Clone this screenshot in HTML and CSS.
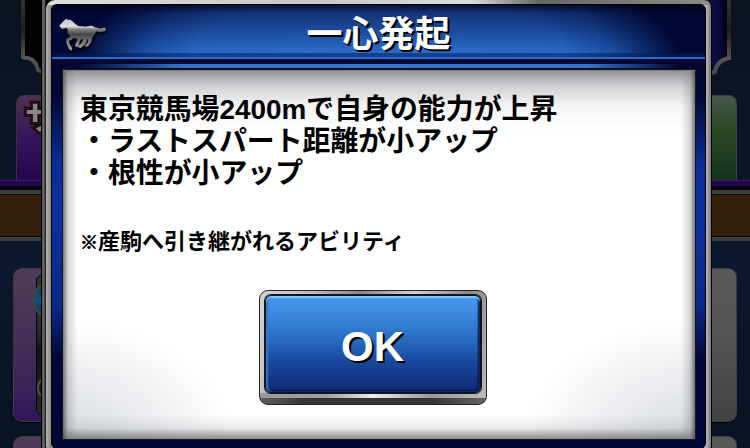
FILE: index.html
```
<!DOCTYPE html>
<html lang="ja">
<head>
    <meta charset="UTF-8">
    <meta name="viewport" content="width=device-width, initial-scale=1.0">
    <title>一心発起</title>
    <link rel="stylesheet" href="styles.css">
</head>
<body>

<!-- Dimmed screen, left of the dialog -->
<div class="side side-left">
    <svg class="emblem" width="42" height="95" viewBox="0 0 42 95">
        <defs>
            <linearGradient id="rim" x1="0" y1="0" x2="0" y2="1">
                <stop offset="0" stop-color="#343434"/>
                <stop offset="0.45" stop-color="#1e1e1e"/>
                <stop offset="0.8" stop-color="#555"/>
                <stop offset="1" stop-color="#484848"/>
            </linearGradient>
        </defs>
        <path d="M23 -4V57Q24 58 28 58Q36 60 38 70L45 73V-4Z" fill="#020203" stroke="url(#rim)" stroke-width="4"/>
    </svg>
    <div class="tab tab-purple">サ</div>
    <div class="strip"></div>
    <div class="brown"></div>
    <div class="card card-purple">
        <div class="gauge">
            <div class="orb"></div>
            <div class="ring"></div>
        </div>
    </div>
    <div class="card card-purple"></div>
</div>

<!-- Dialog -->
<div class="dialog">
    <div class="frame">
        <div class="inner">
            <div class="header">
                <svg class="horse" width="48" height="36" viewBox="22 34 144 108">
                    <defs>
                        <linearGradient id="silver" gradientUnits="userSpaceOnUse" x1="0" y1="38" x2="0" y2="134">
                            <stop offset="0" stop-color="#c4c4c4"/>
                            <stop offset="0.25" stop-color="#dedede"/>
                            <stop offset="0.34" stop-color="#858585"/>
                            <stop offset="0.5" stop-color="#454545"/>
                            <stop offset="0.7" stop-color="#747474"/>
                            <stop offset="1" stop-color="#aaa"/>
                        </linearGradient>
                    </defs>
                    <path d="M27 60L39 47L46 40L51 43L61 44L73 55L82 62L105 64L122 61L134 66L150 70L163 67L164 75L150 79L136 76L131 87L124 95L121 109L112 121L102 121L112 111L113 98L108 101L105 112L91 126L80 123L91 116L98 103L94 97L86 107L84 118L76 123L74 117L80 106L81 98L68 96L64 101L54 105L56 116L64 127L62 134L55 129L47 109L48 101L60 93L53 84L51 68L45 66L34 70Z" fill="url(#silver)" stroke="url(#silver)" stroke-width="2" stroke-linejoin="round"/>
                </svg>
                <h1>一心発起</h1>
            </div>
            <div class="body">
                <div class="panel">
                    <p class="description">東京競馬場2400mで自身の能力が上昇<br>・ラストスパート距離が小アップ<br>・根性が小アップ</p>
                    <p class="note"><span class="mark">※</span>産駒へ引き継がれるアビリティ</p>
                    <button class="ok-button"><span class="ok-face">OK</span></button>
                </div>
            </div>
        </div>
    </div>
</div>

<!-- Dimmed screen, right of the dialog -->
<div class="side side-right">
    <svg class="emblem" width="38" height="95" viewBox="0 0 38 95">
        <defs>
            <linearGradient id="navy" x1="0" y1="0" x2="1" y2="0">
                <stop offset="0" stop-color="#0e1152"/>
                <stop offset="0.5" stop-color="#0b0d40"/>
                <stop offset="0.85" stop-color="#02031a"/>
            </linearGradient>
        </defs>
        <path d="M17 -4V58Q5 60 3 72L-5 74V-4Z" fill="url(#navy)" stroke="url(#rim)" stroke-width="4"/>
    </svg>
    <div class="tab tab-green"></div>
    <div class="strip"></div>
    <div class="brown"></div>
    <div class="card card-gray"></div>
    <div class="card card-gray"></div>
</div>

</body>
</html>
```

FILE: styles.css
```
* {
    box-sizing: border-box;
}

body {
    margin: 0;
    width: 750px;
    height: 448px;
    overflow: hidden;
    display: flex;
    background-color: #0a1426;
    font-family: "Liberation Sans", "Noto Sans CJK JP", sans-serif;
    font-weight: bold;
}

/* Background screen */
.side {
    height: 448px;
    overflow: hidden;
    display: flex;
    flex-direction: column;
    background: linear-gradient(#0a1220, #0b1729 40%, #0b1830 60%, #0a1224);
}

.side-left {
    width: 41px;
}

.side-right {
    width: 38px;
}

.emblem {
    display: block;
    flex: none;
}

.tab {
    flex: none;
    height: 85px;
    border: 1px solid #3b3244;
    border-bottom: none;
}

.tab-purple {
    margin-left: 16px;
    padding: 3px 0 0 8px;
    border-right: none;
    border-radius: 8px 0 0 0;
    background: linear-gradient(#4b3153, #35165a 50%, #22064f);
    color: #868686;
    font-size: 32px;
    line-height: 38px;
    overflow: hidden;
    white-space: nowrap;
    -webkit-text-stroke: 6px #210e12;
    paint-order: stroke fill;
}

.tab-green {
    margin-right: 13px;
    border-color: #384339;
    border-left: none;
    border-radius: 0 8px 0 0;
    background: linear-gradient(#46574b, #2c4823 40%, #12351c);
}

.strip {
    flex: none;
    height: 10px;
    background: #24054f;
    border-top: 1px solid #35205a;
    border-bottom: 4px solid #060509;
}

.brown {
    flex: none;
    height: 51px;
    background: #33200a;
    border-top: 4px solid #3d3d3f;
    border-bottom: 4px solid #3b3b3c;
    box-shadow: inset 0 1px #0d0803, inset 0 -1px #0d0803;
}

.card {
    flex: none;
    height: 154px;
    margin-top: 14px;
    border: 1px solid #3c3c3c;
    box-shadow: 0 1px #000;
}

.brown + .card {
    margin-top: 27px;
}

.card-purple {
    margin-left: 13px;
    border-right: none;
    border-radius: 9px 0 0 9px;
    background: linear-gradient(#4e3c58, #442e57 50%, #31175a);
}

.card-gray {
    margin-right: 13px;
    border-left: none;
    border-radius: 0 9px 9px 0;
    background: linear-gradient(#595959, #555 40%, #424242);
}

.gauge {
    width: 16px;
    height: 140px;
    margin: 6px 0 0 22px;
    border: 1px solid #050505;
    border-radius: 5px;
    background: linear-gradient(#333, #2b2b2b 40%, #111 55%, #292929);
}

.orb {
    width: 38px;
    height: 38px;
    margin: 5px 0 0 -5px;
    border: 3px solid #3d4348;
    border-radius: 50%;
    background: linear-gradient(#083754, #0d527d 50%, #073150);
}

.ring {
    width: 24px;
    height: 24px;
    margin-top: 57px;
    border: 2px solid #4d4d4d;
    border-radius: 50%;
    background: #171717;
}

/* Dialog frame */
.dialog {
    width: 671px;
    height: 470px;
    padding: 0 1px 0 5px;
    background: linear-gradient(90deg, #000 1px, #555 1px, #69696b 3px, #3d3d3e 4px, #000 5px);
    border-radius: 0 8px 0 0;
}

.frame {
    height: 453px;
    padding: 4px 5px 4px;
    border-radius: 9px 7px 8px 8px;
    background:
        linear-gradient(90deg, #dedede, #c9c9c9 40%, #ddd 64%, #666 74%, #8b8b8b 100%) 0 0 / 100% 5px no-repeat,
        linear-gradient(90deg, #b5b6b6, #858686 5px, #8b898a 655px, #bdb9bb 660px, #7b7779);
}

.inner {
    height: 100%;
    border: 1px solid #000;
    border-radius: 6px;
    overflow: hidden;
    background: linear-gradient(#000733 0, #000832 90px, #0b2a94 155px, #0d30a0 200px, #0b2889 300px, #000736 355px, #000735);
}

.header {
    display: flex;
    height: 54px;
    padding-left: 6px;
    border-bottom: 2px solid #2a6cca;
    background:
        linear-gradient(rgba(5, 28, 90, 0.55), rgba(5, 28, 90, 0.55)) 0 100% / 100% 4px no-repeat,
        linear-gradient(rgba(0, 3, 25, 0.85), rgba(0, 8, 50, 0.55) 8px, rgba(0, 10, 60, 0.4) 20px, rgba(0, 0, 0, 0) 48px),
        radial-gradient(ellipse 300px 105px at 50% 100%, #2c6ccd 0, #2a69c8 62%, #1c50a4 78%, #000733 100%);
}

.horse {
    flex: none;
    margin-top: 12px;
    filter: drop-shadow(1px 2px 1px #000);
}

h1 {
    margin: 0 54px 0 0;
    flex: 1;
    text-align: center;
    color: #fff;
    font-family: "Noto Sans CJK JP", sans-serif;
    font-size: 36px;
    font-weight: bold;
    line-height: 52px;
    text-shadow: 1px 1px #000, 2px 2px #000;
}

.body {
    padding: 10px 9px 0 10px;
    background:
        linear-gradient(90deg, rgba(26, 88, 176, 0) 4%, #2f74cd 20%, #3377d0 50%, #2f74cd 82%, rgba(26, 88, 176, 0) 96%) 0 5px / 100% 4px no-repeat;
}

.panel {
    display: flex;
    flex-direction: column;
    height: 371px;
    padding: 24px 17px 0;
    border: 1px solid #18191c;
    background:
        linear-gradient(#7c7d7c, #7c7d7c) 0 0 / 100% 1px no-repeat,
        linear-gradient(90deg, rgba(80, 82, 84, 0.8), rgba(120, 122, 125, 0.3) 5px, rgba(255, 255, 255, 0) 14px),
        linear-gradient(270deg, rgba(80, 82, 84, 0.8), rgba(120, 122, 125, 0.3) 5px, rgba(255, 255, 255, 0) 14px),
        linear-gradient(0deg, rgba(90, 92, 94, 0.7), rgba(150, 153, 158, 0.2) 11px, rgba(255, 255, 255, 0) 24px),
        linear-gradient(rgba(105, 108, 118, 0.75), rgba(150, 152, 158, 0.45) 16px, rgba(220, 221, 224, 0.3) 36px, rgba(255, 255, 255, 0) 65px),
        radial-gradient(ellipse 170px 120px at 0 100%, rgba(185, 191, 200, 0.6), rgba(255, 255, 255, 0)),
        radial-gradient(ellipse 170px 120px at 100% 100%, rgba(185, 191, 200, 0.6), rgba(255, 255, 255, 0)),
        #fff;
}

/* Text */
.description {
    margin: 0;
    color: #000;
    font-size: 27.9px;
    line-height: 32px;
    white-space: nowrap;
}

.note {
    margin: 35px 0 0;
    color: #000;
    font-size: 22px;
    line-height: 32px;
    white-space: nowrap;
}

.mark {
    font-family: "Noto Sans CJK JP", sans-serif;
    font-size: 18px;
    -webkit-text-stroke: 0.7px #000;
}

/* OK button */
.ok-button {
    align-self: center;
    display: flex;
    width: 228px;
    height: 115px;
    margin: 32px 13px 0 0;
    padding: 4px 5px 11px;
    border: 1px solid #222;
    border-radius: 9px;
    background:
        linear-gradient(90deg, #606060, #333 20%, #333 75%, #666) 0 100% / 100% 6px no-repeat,
        linear-gradient(90deg, #999, #a0a0a0 30%, #ededed 50%, #999 75%, #bbb) 0 100% / 100% 11px no-repeat,
        linear-gradient(110deg, #d4d4d4, #bcbcbc 20%, #898788 38%, #d2d0d1 58%, #8c8889 78%, #bbb);
    cursor: pointer;
}

.ok-face {
    flex: 1;
    border: 1px solid #071223;
    border-radius: 6px;
    background: linear-gradient(#469af0, #3b89df 20%, #2568bd 48%, #174699 70%, #102a75);
    box-shadow: inset 0 2px 1px #7fc6ff, inset 2px 0 2px #3477c3, inset -2px -2px 2px #051443, 0 0 0 1px #181818;
    color: #fff;
    font-family: "Liberation Sans", sans-serif;
    font-size: 42px;
    font-weight: bold;
    line-height: 102px;
    text-align: center;
    text-shadow: 1px 1px #000, 2px 2px #000;
}
```
